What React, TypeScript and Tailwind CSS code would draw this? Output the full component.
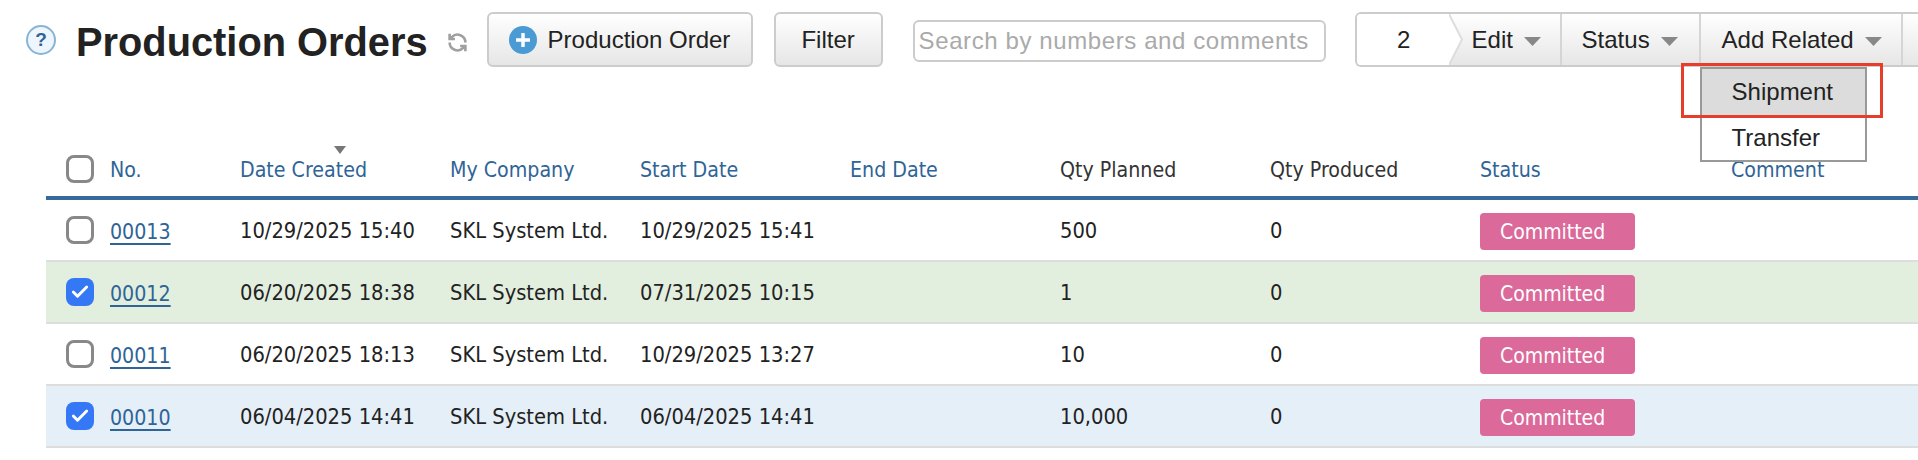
import React from 'react';
import { Check } from 'lucide-react';

const gridCols = 'grid grid-cols-[64px_130px_210px_190px_210px_210px_210px_210px_251px_1fr] items-center';

const orders = [
  { no: '00013', created: '10/29/2025 15:40', start: '10/29/2025 15:41', qty: '500', checked: false, bg: 'bg-white' },
  { no: '00012', created: '06/20/2025 18:38', start: '07/31/2025 10:15', qty: '1', checked: true, bg: 'bg-[#e2efdf]' },
  { no: '00011', created: '06/20/2025 18:13', start: '10/29/2025 13:27', qty: '10', checked: false, bg: 'bg-white' },
  { no: '00010', created: '06/04/2025 14:41', start: '06/04/2025 14:41', qty: '10,000', checked: true, bg: 'bg-[#e5eff8]' },
];

function Caret() {
  return (
    <svg width="17" height="9" viewBox="0 0 17 9" className="ml-[11px] mt-[3px]">
      <path d="M0 0H17L8.5 9Z" fill="#888888" />
    </svg>
  );
}

function RowCheckbox({ checked }: { checked?: boolean }) {
  if (checked) {
    return (
      <span className="ml-[20px] flex h-[28px] w-[28px] items-center justify-center rounded-[8px] bg-[#3478f6] text-white">
        <Check size={20} strokeWidth={3.5} />
      </span>
    );
  }
  return <span className="ml-[20px] block h-[28px] w-[28px] rounded-[8px] border-[3px] border-[#888888] bg-white" />;
}

export default function App() {
  return (
    <div className="relative h-[460px] w-full overflow-hidden bg-white font-['DejaVu_Sans_Condensed','Noto_Sans',sans-serif] text-[21.7px] text-[#222222]">
      {/* Toolbar */}
      <div className="flex h-[67px] items-start pt-[12px] font-['Liberation_Sans',Arial,sans-serif] text-[24px]">
        <div className="ml-[26px] mt-[13px] flex h-[30px] w-[30px] items-center justify-center rounded-full border-2 border-[#8ab4d4] bg-[#eef6fd] text-[19px] font-bold text-[#2f6496]">
          ?
        </div>
        <h1 className="ml-[20px] mt-[7px] text-[39.8px] font-bold leading-[46px] whitespace-nowrap">Production Orders</h1>
        <svg width="21" height="21" viewBox="0 0 24 24" fill="none" stroke="#a0a0a0" strokeWidth="3" className="ml-[19px] mt-[20px]">
          <path d="M21 12a9 9 0 0 0-15.5-6.2L3 8" />
          <path d="M3 2v6h6" />
          <path d="M3 12a9 9 0 0 0 15.5 6.2L21 16" />
          <path d="M21 22v-6h-6" />
        </svg>
        <button type="button" className="ml-[19px] flex h-[55px] w-[266px] items-center rounded-[6px] border-2 border-[#cccccc] bg-gradient-to-b from-white to-[#e6e6e6] pl-[20px]">
          <svg width="28" height="28" viewBox="0 0 28 28">
            <circle cx="14" cy="14" r="14" fill="#4a9ad4" />
            <path d="M14 7v14M7 14h14" stroke="#ffffff" strokeWidth="3.5" />
          </svg>
          <span className="ml-[11px] whitespace-nowrap">Production Order</span>
        </button>
        <button type="button" className="ml-[21px] h-[55px] w-[109px] rounded-[6px] border-2 border-[#cccccc] bg-gradient-to-b from-white to-[#e6e6e6]">
          Filter
        </button>
        <input
          placeholder="Search by numbers and comments"
          className="ml-[30px] mt-[8px] h-[42px] w-[413px] rounded-[6px] border-2 border-[#cccccc] bg-white pl-[4px] tracking-[0.6px] placeholder:text-[#aaaaaa]"
        />
        <div className="ml-[29px] flex h-[55px] flex-1 rounded-l-[6px] border-y-2 border-l-2 border-[#cccccc] bg-gradient-to-b from-white to-[#e6e6e6]">
          <div className="relative z-10 flex w-[92px] items-center justify-center rounded-l-[4px] bg-white pl-[2px]">
            2
            <svg width="15" height="51" viewBox="0 0 15 51" className="absolute left-full top-0">
              <path d="M0 0L13 25.5L0 51Z" fill="#ffffff" />
              <path d="M0 0L13 25.5L0 51" fill="none" stroke="#dddddd" strokeWidth="2" />
            </svg>
          </div>
          <div className="flex w-[113px] items-center border-r-2 border-[#d5d5d5] pl-[23px]">
            Edit
            <Caret />
          </div>
          <div className="flex w-[139px] items-center border-r-2 border-[#d5d5d5] pl-[20px]">
            Status
            <Caret />
          </div>
          <div className="relative flex w-[202px] items-center border-r-2 border-[#d5d5d5] pl-[21px]">
            Add Related
            <Caret />
            {/* Dropdown */}
            <div className="absolute left-[-1px] top-[53px] z-20 w-[167px] border-2 border-[#999999] bg-white">
              <div className="flex h-[46px] items-center bg-[#dcdcdc] pl-[30px]">Shipment</div>
              <div className="flex h-[45px] items-center pl-[30px]">Transfer</div>
            </div>
            {/* Red highlight */}
            <div className="absolute left-[-20px] top-[49px] z-30 h-[55px] w-[202px] border-[3px] border-[#e53e2a]" />
          </div>
        </div>
      </div>

      {/* Table */}
      <div className="ml-[46px] mt-[75px]">
        <div className={`${gridCols} h-[54px] text-[21.2px] text-[#2f6496]`}>
          <RowCheckbox />
          <span className="pt-[1px]">No.</span>
          <span className="relative pt-[1px]">
            <svg width="12" height="8" viewBox="0 0 12 8" className="absolute left-[94px] top-[-7px]">
              <path d="M0 0H12L6 8Z" fill="#777777" />
            </svg>
            Date Created
          </span>
          <span className="pt-[1px]">My Company</span>
          <span className="pt-[1px]">Start Date</span>
          <span className="pt-[1px]">End Date</span>
          <span className="pt-[1px] text-[#333333]">Qty Planned</span>
          <span className="pt-[1px] text-[#333333]">Qty Produced</span>
          <span className="pt-[1px]">Status</span>
          <span className="pt-[1px]">Comment</span>
        </div>
        <div className="h-[4px] bg-[#356a9b]" />
        {orders.map((order) => (
          <div key={order.no} className={`${gridCols} h-[62px] border-b-2 border-[#dddddd] ${order.bg}`}>
            <RowCheckbox checked={order.checked} />
            <a href="#" className="w-fit pt-[3px] text-[21.2px] text-[#2f6496] underline decoration-2 underline-offset-[4px]">
              {order.no}
            </a>
            <span className="pt-[3px]">{order.created}</span>
            <span className="pt-[3px]">SKL System Ltd.</span>
            <span className="pt-[3px]">{order.start}</span>
            <span />
            <span className="pt-[3px]">{order.qty}</span>
            <span className="pt-[3px]">0</span>
            <span className="mt-[3px] flex h-[37px] w-[155px] items-center rounded-[4px] bg-[#db6a9b] pl-[20px] pt-[2px] text-[21px] text-white">
              Committed
            </span>
            <span />
          </div>
        ))}
      </div>
    </div>
  );
}
